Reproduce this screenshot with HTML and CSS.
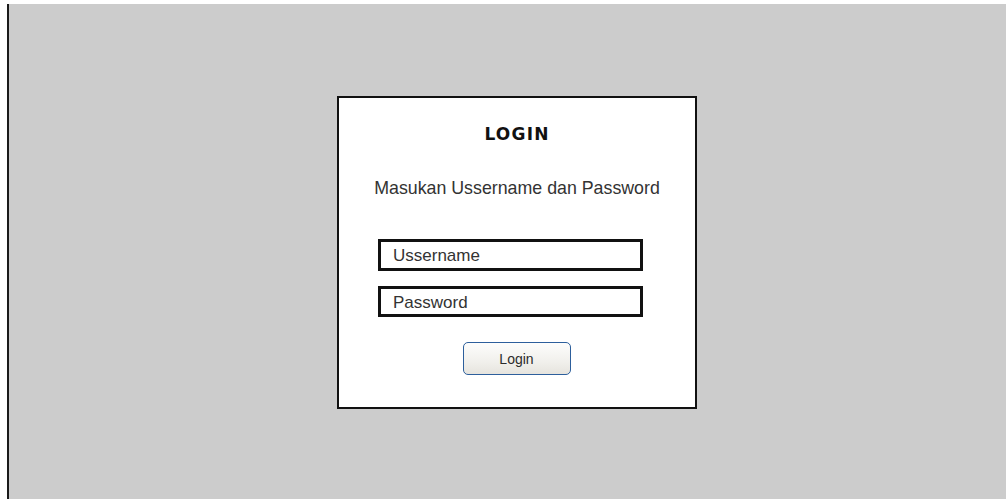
FILE: index.html
```html
<!DOCTYPE html>
<html lang="id">
<head>
<meta charset="utf-8">
<title>Login</title>
<link rel="stylesheet" href="styles.css">
</head>
<body>
<div class="frame">
  <div class="stage">
    <form class="card">
      <h1 class="card-title">LOGIN</h1>
      <p class="card-subtitle">Masukan Ussername dan Password</p>
      <input class="field field-user" type="text" placeholder="Ussername">
      <input class="field field-pass" type="password" placeholder="Password">
      <div class="actions">
        <button class="btn" type="button">Login</button>
      </div>
    </form>
  </div>
</div>
</body>
</html>
```

FILE: styles.css
```css
html, body {
  margin: 0;
  padding: 0;
  height: 100%;
  background: #ffffff;
  overflow: hidden;
}

.frame {
  box-sizing: border-box;
  height: 100%;
  padding: 4px 0 0 7px;
}

.stage {
  box-sizing: border-box;
  height: 100%;
  background: #cccccc;
  border-left: 2px solid #1a1a1a;
  padding: 92px 0 0 328px;
}

.card {
  box-sizing: border-box;
  width: 360px;
  height: 313px;
  margin: 0;
  background: #ffffff;
  border: 2px solid #111111;
  padding: 26px 0 0 39px;
  display: flex;
  flex-direction: column;
  align-items: flex-start;
}

.card-title {
  align-self: stretch;
  margin: 0 0 0 -39px;
  font-family: "DejaVu Sans", sans-serif;
  font-weight: bold;
  font-size: 17px;
  line-height: 20px;
  letter-spacing: 1.2px;
  color: #111111;
  text-align: center;
}

.card-subtitle {
  align-self: stretch;
  margin: 34px 0 0 -39px;
  font-family: "Liberation Sans", Arial, sans-serif;
  font-size: 17.8px;
  line-height: 20px;
  color: #333333;
  text-align: center;
}

.field {
  box-sizing: border-box;
  width: 265px;
  height: 32px;
  margin: 0;
  padding: 2px 0 0 12px;
  border: 3px solid #111111;
  border-radius: 0;
  background: #ffffff;
  font-family: "Liberation Sans", Arial, sans-serif;
  font-size: 17px;
  color: #333333;
  outline: none;
}

.field::placeholder {
  color: #333333;
  opacity: 1;
}

.field-user {
  margin-top: 41px;
}

.field-pass {
  margin-top: 15px;
  height: 31px;
}

.actions {
  align-self: stretch;
  margin: 25px 0 0 -39px;
  display: flex;
  justify-content: center;
}

.btn {
  box-sizing: border-box;
  width: 108px;
  height: 33px;
  margin-left: -1px;
  padding: 0;
  border: 1px solid #2d5f9c;
  border-radius: 5px;
  background: linear-gradient(#fdfdfc, #f1f0ec 60%, #e6e4de);
  font-family: "Liberation Sans", Arial, sans-serif;
  font-size: 14px;
  color: #2b2b2b;
  cursor: pointer;
}
```
